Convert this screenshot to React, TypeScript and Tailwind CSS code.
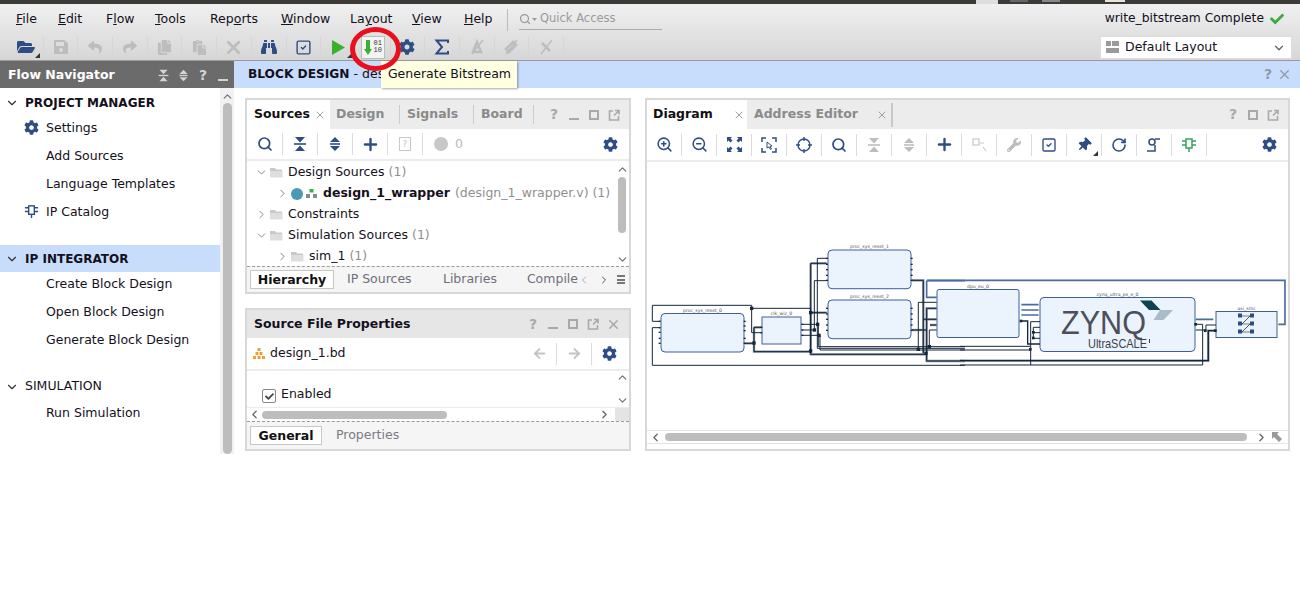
import React from 'react';
import { ChevronDown, ChevronLeft, ChevronRight, ChevronUp, Plus, RotateCw, Search, SquareCheck, X, ZoomIn, ZoomOut } from 'lucide-react';
import { FaArrowLeft, FaArrowRight, FaBinoculars, FaCheck, FaCog, FaCopy, FaFolderOpen, FaPaste, FaReply, FaSave, FaShare, FaThumbtack, FaWrench } from 'react-icons/fa';

const NAVY = '#2f4d85';
const DIM = '#bdbdbd';

function Corner() {
  return <span className="absolute right-[3px] bottom-[0px] w-0 h-0 border-l-[5px] border-l-transparent border-b-[5px] border-b-[#333]" />;
}

function Collapse({ color = NAVY, size = 16 }: { color?: string; size?: number }) {
  return (
    <svg width={size} height={size} viewBox="0 0 16 16">
      <path d="M3 1h10L8 6.5zM3 15h10L8 9.5z" fill={color} />
      <rect x="2" y="7.2" width="12" height="1.6" fill={color} />
    </svg>
  );
}

function Expand({ color = NAVY, size = 16 }: { color?: string; size?: number }) {
  return (
    <svg width={size} height={size} viewBox="0 0 16 16">
      <path d="M3 6h10L8 1zM3 10h10l-5 5z" fill={color} />
      <rect x="3" y="7.2" width="10" height="1.6" fill={color} />
    </svg>
  );
}

function Sigma() {
  return (
    <svg width="16" height="16" viewBox="0 0 16 16">
      <path d="M14 4V1.500H2.500L8 8l-5.500 6.500H14V12" fill="none" stroke={NAVY} strokeWidth="2" />
    </svg>
  );
}

function Slashed({ d }: { d: string }) {
  return (
    <svg width="18" height="18" viewBox="0 0 18 18" stroke={DIM} fill="none">
      <path d={d} strokeWidth="2.500" />
      <path d="M4 16 15 2" strokeWidth="1.500" />
    </svg>
  );
}

function Chip({ color = NAVY, size = 16 }: { color?: string; size?: number }) {
  return (
    <svg width={size} height={size} viewBox="0 0 16 16" fill="none" stroke={color} strokeWidth="1.500">
      <rect x="5" y="2" width="6" height="9" />
      <path d="M1 4h4M1 8h4M11 4h4M11 8h4M8 11v4" />
    </svg>
  );
}

function FolderGlyph() {
  return (
    <svg width="13" height="11" viewBox="0 0 13 11" className="shrink-0">
      <path d="M0 1h5l1 1.500h6V4H0z" fill="#c9c9c9" />
      <path d="M0 4h12.500v6.500H0z" fill="#dedede" />
    </svg>
  );
}

// one toolbar cell, 35px wide with the divider on its right
function Cell({ children, sep = true }: { children?: React.ReactNode; sep?: boolean }) {
  return (
    <div className={`relative w-[35px] h-[22px] flex items-center justify-center shrink-0 ${sep ? 'border-r border-[#dcdcdc]' : ''}`}>
      {children}
    </div>
  );
}

// main toolbar is a hair tighter than the panel ones
function TopCell({ children }: { children?: React.ReactNode }) {
  return (
    <div className="relative w-[34.700px] h-[22px] flex items-center justify-center shrink-0 border-r border-[#d6d6d6]">
      {children}
    </div>
  );
}

function WinButtons({ close = false, min = true }: { close?: boolean; min?: boolean }) {
  return (
    <div className="flex items-center gap-[6px] text-[#a9a9a9]">
      <span className="w-[14px] text-center font-bold text-[14px]">?</span>
      {min && <span className="w-[14px] h-[10px] flex items-end justify-center"><span className="w-[10px] h-[2px] bg-[#a9a9a9]" /></span>}
      <span className="w-[14px] flex justify-center"><span className="w-[10px] h-[10px] border-2 border-[#a9a9a9]" /></span>
      <svg width="14" height="14" viewBox="0 0 14 14" fill="none" stroke="#a9a9a9" strokeWidth="1.600">
        <path d="M6 3H2.500v9h9V8M8 2.500h4v4M12 2.500 7 7.500" />
      </svg>
      {close && <X size={15} strokeWidth={2.400} />}
    </div>
  );
}

function NavRow({ label, icon }: { label: string; icon?: React.ReactNode }) {
  return (
    <div className="h-[28px] flex items-center relative pl-[46px]">
      {icon && <span className="absolute left-[24px] top-[6px]">{icon}</span>}
      {label}
    </div>
  );
}

function NavHead({ label, bold = true, active, h = 'h-[24px]' }: { label: string; bold?: boolean; active?: boolean; h?: string }) {
  return (
    <div className={`${h} flex items-center pl-[5px] gap-[6px] ${active ? 'bg-[#c8dcfb]' : ''} ${bold ? 'font-bold text-[12px]' : ''}`}>
      <ChevronDown size={14} strokeWidth={2} className="text-[#333]" />
      <span>{label}</span>
    </div>
  );
}

function TreeRow({ indent, open, children }: { indent: string; open?: boolean; children: React.ReactNode }) {
  const Arrow = open ? ChevronDown : ChevronRight;
  return (
    <div className={`h-[21px] flex items-center whitespace-nowrap ${indent}`}>
      <Arrow size={13} strokeWidth={1.600} className="text-[#777] mr-[2px] shrink-0" />
      {children}
    </div>
  );
}

function Block({ x, y, w, h, r = 4, label }: { x: number; y: number; w: number; h: number; r?: number; label: string }) {
  return (
    <g>
      <rect x={x} y={y} width={w} height={h} rx={r} fill="#ebf3fc" stroke="#3e5f9c" strokeWidth="1" />
      <text x={x + w / 2} y={y - 2} fontSize="4.600" textAnchor="middle" fill="#555">{label}</text>
    </g>
  );
}

function Diagram() {
  const thin = { fill: 'none', stroke: '#14263a', strokeWidth: 3 };
  const heavy = ['M300 310H327M327 262H350M327 262V335H497', 'M497 70H545M497 70V343H845V363H960', 'M497 218H545', 'M800 121H835V340', 'M800 270H845', 'M835 238H875', 'M875 205H845V340', 'M875 255H855'];
  const pinsLeft = [205, 222, 238, 255, 271];
  return (
    <svg width="641" height="268" viewBox="647 162 641 268" className="block">
      <Block x={661} y={313.500} w={83} h={38.500} label="proc_sys_reset_0" />
      <Block x={828} y={250} w={83} h={38.700} label="proc_sys_reset_1" />
      <Block x={828} y={300} w={83} h={38.700} label="proc_sys_reset_2" />
      <Block x={762} y={317} w={39} h={27} r={0} label="clk_wiz_0" />
      <Block x={937} y={289.500} w={82} h={48} r={2} label="dpu_eu_0" />
      <Block x={1040} y={297.500} w={155} h={54} label="zynq_ultra_ps_e_0" />
      <Block x={1216} y={311.500} w={61} h={26} r={0} label="axi_smc" />

      {/* wires taken from the left half */}
      <g transform="translate(645 240) scale(0.3333)">
        {heavy.map(d => <path key={d} d={d} fill="none" stroke="#7e8a97" strokeWidth="7" />)}
        {heavy.map(d => <path key={d + 'c'} d={d} fill="none" stroke="#14263a" strokeWidth="3" />)}
        <path d="M45 244H22V196H320V205H497V340" {...thin} />
        <path d="M45 263H22V376H960" {...thin} />
        <path d="M320 205V278H350" {...thin} />
        <path d="M517 55H545M517 55V325H960" {...thin} />
        <path d="M508 122H545M508 122V270M470 270H508" {...thin} />
        <path d="M470 253H520V320H960" {...thin} />
        <path d="M470 286H525V330H960" {...thin} />
        <path d="M875 187H820V328" {...thin} />
        <path d="M853 320V270H875" {...thin} />
        <path d="M845 122V172H875M845 122H960" fill="none" stroke="#4a6ca5" strokeWidth="5" />
        {[[320, 205], [327, 309], [497, 218], [518, 253], [508, 270], [522, 286], [497, 333], [820, 328], [853, 320], [843, 340]].map(([cx, cy]) => (
          <rect key={`${cx}-${cy}`} x={cx - 5} y={cy - 5} width="10" height="10" fill="#14263a" />
        ))}
        {[[44, 244], [44, 263], [44, 277], [44, 295], [44, 310], [299, 244], [299, 258], [299, 272], [299, 295], [299, 310], [472, 253], [472, 270], [472, 286], [349, 262], [349, 278]].map(([cx, cy]) => (
          <rect key={`p${cx}-${cy}`} x={cx - 3} y={cy - 2} width="6" height="4" fill="#14263a" />
        ))}
        {[55, 73, 89, 106, 121].map(cy => <rect key={`a${cy}`} x={543} y={cy - 2} width="6" height="4" fill="#14263a" />)}
        {pinsLeft.map(cy => <rect key={`b${cy}`} x={543} y={cy - 2} width="6" height="4" fill="#14263a" />)}
        {[55, 73, 89, 106, 121].map(cy => <rect key={`c${cy}`} x={797} y={cy - 2} width="6" height="4" fill="#14263a" />)}
        {pinsLeft.map(cy => <rect key={`d${cy}`} x={797} y={cy - 2} width="6" height="4" fill="#14263a" />)}
      </g>

      {/* wires taken from the right half */}
      <g transform="translate(960 270) scale(0.3333)">
        <path d="M-99 31H975V163H955" fill="none" stroke="#4a6ca5" strokeWidth="5" />
        <path d="M184 104H236M184 120H236M184 135H236M707 148H760" fill="none" stroke="#4a6ca5" strokeWidth="5" />
        <path d="M0 272H745V182H768" fill="none" stroke="#7e8a97" strokeWidth="7" />
        <path d="M0 272H745V182H768M185 153H203V222H240" fill="none" stroke="#14263a" strokeWidth="4" />
        <path d="M240 155H212V285M0 285H728V163H707" {...thin} />
        <path d="M240 172H220V205M240 188H220M240 205H220" {...thin} />
        <path d="M0 229H210M0 240H210" {...thin} />
        <path d="M707 180H738V165H768" {...thin} />
        {[[183, 153], [211, 238], [220, 187], [220, 204], [707, 163], [736, 182], [766, 182]].map(([cx, cy]) => (
          <rect key={`${cx}-${cy}`} x={cx - 4} y={cy - 4} width="8" height="8" fill="#14263a" />
        ))}
      </g>

      {/* zynq logo */}
      <text x="1061" y="334" fontSize="33" fill="#4c4f5c" textLength="85" lengthAdjust="spacingAndGlyphs" fontFamily="'Liberation Sans', sans-serif">ZYNQ</text>
      <text x="1088" y="348" fontSize="13.500" fill="#3c3f4c" textLength="59" lengthAdjust="spacingAndGlyphs" fontFamily="'Liberation Sans', sans-serif">UltraSCALE</text>
      <rect x="1149" y="339" width="1" height="4" fill="#3c3f4c" />
      <path d="M1140 300.500h11.500l9 9.500H1149z" fill="#0d4450" />
      <path d="M1160 310h13l-9.500 10h-10z" fill="#aabcc8" />

      {/* axi_smc crossbar glyph */}
      <g fill={NAVY}>
        {[0, 1, 2].map(i => (
          <g key={i}>
            <rect x="1238" y={313.500 + i * 8} width="4" height="4" />
            <rect x="1250" y={313.500 + i * 8} width="4" height="4" />
          </g>
        ))}
      </g>
      <path d="M1242 316h8l-8 8h8l-8 8h8M1242 324l8-8M1242 332l8-8" fill="none" stroke="#333" strokeWidth="0.600" />
    </svg>
  );
}

const menu = [
  { pre: '', u: 'F', post: 'ile', w: 'w-[42px]' },
  { pre: '', u: 'E', post: 'dit', w: 'w-[48px]' },
  { pre: 'F', u: 'l', post: 'ow', w: 'w-[49px]' },
  { pre: '', u: 'T', post: 'ools', w: 'w-[55px]' },
  { pre: 'Rep', u: 'o', post: 'rts', w: 'w-[71px]' },
  { pre: '', u: 'W', post: 'indow', w: 'w-[69px]' },
  { pre: 'La', u: 'y', post: 'out', w: 'w-[62px]' },
  { pre: '', u: 'V', post: 'iew', w: 'w-[52px]' },
  { pre: '', u: 'H', post: 'elp', w: 'w-[41px]' },
];

export default function App() {
  return (
    <div className="relative w-[1300px] h-[601px] bg-white overflow-hidden font-['DejaVu_Sans',sans-serif] text-[12.500px] text-[#14101c]">
      {/* sliver of the desktop above the window */}
      <div className="h-[4px] bg-[#3c3b37] flex pl-[976px]">
        <span className="w-[22px] h-full bg-[#dedede]" />
        <span className="w-[18px] h-[2px] ml-[12px] bg-[#666]" />
        <span className="w-[18px] h-[2px] ml-[14px] bg-[#888]" />
        <span className="w-[20px] h-[2px] ml-[45px] bg-[#e8e4d8]" />
      </div>

      {/* menu + toolbar */}
      <div className="h-[56px] bg-gradient-to-b from-[#f0f0f0] to-[#d6d6d6] flex justify-between">
        <div>
          <div className="h-[30px] flex items-center pl-[16px] pt-[1px]">
            {menu.map(m => (
              <span key={m.u + m.post} className={`${m.w} shrink-0`}>
                {m.pre}<span className="underline">{m.u}</span>{m.post}
              </span>
            ))}
            <span className="w-px h-[22px] bg-[#bbb] mr-[11px] ml-[2px]" />
            <div className="w-[143px] h-[21px] flex items-center border-b border-[#aaa] text-[#9a9a9a] text-[11.500px]">
              <Search size={12} strokeWidth={2.500} />
              <svg width="5" height="3" viewBox="0 0 5 3" fill="#9a9a9a" className="ml-px mr-[2px]"><path d="M0 0h5L2.500 3z" /></svg>
              <span className="ml-[1px]">Quick Access</span>
            </div>
          </div>
          <div className="h-[26px] flex items-center pl-[9px] text-[#bdbdbd]">
            <TopCell><FaFolderOpen size={18} color={NAVY} /><Corner /></TopCell>
            <TopCell><FaSave size={16} /></TopCell>
            <TopCell><FaReply size={14} /></TopCell>
            <TopCell><FaShare size={14} /></TopCell>
            <TopCell><FaCopy size={15} /></TopCell>
            <TopCell><FaPaste size={15} /></TopCell>
            <TopCell><X size={21} strokeWidth={3} /></TopCell>
            <TopCell><FaBinoculars size={16} color={NAVY} /></TopCell>
            <TopCell><SquareCheck size={17} color={NAVY} strokeWidth={2} /></TopCell>
            <TopCell>
              <svg width="13" height="15" viewBox="0 0 13 15"><path d="M0 0l13 7.500L0 15z" fill="#3bb02f" /></svg>
              <Corner />
            </TopCell>
            <TopCell>
              <div className="w-[24px] h-[23px] bg-[#f4f4f4] border border-[#bcbcbc] flex items-center justify-center gap-[2px]">
                <svg width="8" height="15" viewBox="0 0 8 15"><path d="M2 0h4v9h2l-4 6-4-6h2z" fill="#3bb02f" /></svg>
                <span className="text-[7px] leading-[7px] text-[#333] font-['Liberation_Mono',monospace]">01<br />10</span>
              </div>
            </TopCell>
            <TopCell><FaCog size={16} color={NAVY} /></TopCell>
            <TopCell><Sigma /></TopCell>
            <TopCell><Slashed d="M5 14 9 4l4 10z" /></TopCell>
            <TopCell><Slashed d="M4 11 11 4l3 3-7 7z" /></TopCell>
            <TopCell><Slashed d="M5 5 13 13" /></TopCell>
          </div>
        </div>
        <div className="w-[193px] pr-[8px] flex flex-col items-end">
          <div className="h-[29px] flex items-center gap-[6px] pr-[8px] whitespace-nowrap text-[12.300px]">
            write_bitstream Complete <FaCheck size={14} color="#3eaa3e" />
          </div>
          <div className="w-[192px] h-[23px] mt-[3px] bg-white border border-[#dcdcdc] flex items-center pl-[5px]">
            <svg width="13" height="13" viewBox="0 0 13 13" fill="#9a9a9a"><path d="M0 0h5v5H0zM6 0h7v5H6zM0 7h13v5H0z" /></svg>
            <span className="ml-[6px]">Default Layout</span>
            <ChevronDown size={14} strokeWidth={2.400} className="ml-auto mr-[5px] text-[#666]" />
          </div>
        </div>
      </div>

      <div className="h-px bg-[#9a9a9a]" />

      <div className="flex h-[393px]">
        {/* flow navigator */}
        <div className="w-[234px] shrink-0 flex flex-col">
          <div className="h-[27px] shrink-0 bg-[#6b6b6b] text-white font-bold text-[12.500px] flex items-center pl-[8px] pt-px">
            <span>Flow Navigator</span>
            <div className="ml-auto flex items-center pr-[1px] text-[#d4d4d4]">
              <span className="w-[20px] flex justify-center"><Collapse color="#d4d4d4" size={13} /></span>
              <span className="w-[20px] flex justify-center"><Expand color="#d4d4d4" size={13} /></span>
              <span className="w-[20px] text-center text-[14px]">?</span>
              <span className="w-[20px] flex justify-center pt-[9px]"><span className="w-[10px] h-[2px] bg-[#d4d4d4]" /></span>
            </div>
          </div>
          <div className="flex flex-1 min-h-0">
            <div className="w-[220px] pt-[3px]">
              <NavHead label="PROJECT MANAGER" h="h-[23px]" />
              <NavRow label="Settings" icon={<FaCog size={15} color={NAVY} />} />
              <NavRow label="Add Sources" />
              <NavRow label="Language Templates" />
              <NavRow label="IP Catalog" icon={<Chip size={15} />} />
              <div className="h-[19px]" />
              <NavHead label="IP INTEGRATOR" active h="h-[27px]" />
              <div className="-mt-[2px]">
                <NavRow label="Create Block Design" />
                <NavRow label="Open Block Design" />
                <NavRow label="Generate Block Design" />
              </div>
              <div className="h-[20px]" />
              <NavHead label="SIMULATION" bold={false} h="h-[25px]" />
              <NavRow label="Run Simulation" />
            </div>
            <div className="w-[14px] bg-[#f1f1f1] flex flex-col items-center">
              <ChevronUp size={13} strokeWidth={2.400} className="text-[#777] mt-[2px] shrink-0" />
              <div className="w-[9px] flex-1 bg-[#bdbdbd] rounded-[5px]" />
            </div>
          </div>
        </div>

        <div className="flex-1 flex flex-col">
          <div className="h-[27px] shrink-0 bg-[#c8dcfb] flex items-center pl-[14px] pr-[8px]">
            <span className="font-bold text-[12.200px]">BLOCK DESIGN</span>
            <span className="ml-[4px]">- des</span>
            <div className="ml-auto flex items-center gap-[5px] text-[#8f9aa8]">
              <span className="font-bold text-[14px]">?</span><X size={15} strokeWidth={2} />
            </div>
          </div>

          <div className="flex pt-[10px] pl-[11px] gap-[14px]">
            <div className="w-[386px] flex flex-col gap-[14px]">
              {/* sources */}
              <div className="h-[196px] border-2 border-[#d8d8d8] flex flex-col bg-white">
                <div className="h-[29px] shrink-0 bg-[#ececec] flex items-center font-bold text-[#8a8a8a]">
                  <div className="w-[83px] h-full bg-white flex items-center pl-[7px] gap-[4px] text-[#111]">
                    <span>Sources</span><X size={12} strokeWidth={1.600} className="text-[#888]" />
                  </div>
                  <span className="w-[70px] pl-[6px] border-r border-[#ccc]">Design</span>
                  <span className="w-[74px] pl-[7px] border-r border-[#ccc]">Signals</span>
                  <span className="w-[60px] pl-[7px] border-r border-[#ccc]">Board</span>
                  <div className="ml-auto pr-[8px] font-normal"><WinButtons /></div>
                </div>
                <div className="h-[32px] shrink-0 flex items-center pl-[1px] border-b-2 border-[#ececec]">
                  <Cell><Search size={16} color={NAVY} strokeWidth={2.600} /></Cell>
                  <Cell><Collapse /></Cell>
                  <Cell><Expand /></Cell>
                  <Cell><Plus size={19} color={NAVY} strokeWidth={3} /></Cell>
                  <Cell>
                    <span className="w-[12px] h-[14px] border border-[#c8c8c8] text-[9px] leading-[12px] text-center text-[#c0c0c0]">?</span>
                  </Cell>
                  <div className="flex items-center gap-[7px] pl-[11px] text-[#bbb]">
                    <span className="w-[14px] h-[14px] rounded-full bg-[#c8c8c8]" /> 0
                  </div>
                  <FaCog size={15} color={NAVY} className="ml-auto mr-[11px]" />
                </div>
                <div className="flex-1 flex min-h-0">
                  <div className="flex-1 min-w-0 overflow-hidden pt-px">
                    <TreeRow indent="pl-[8px]" open><span className="mr-[5px]"><FolderGlyph /></span>Design Sources <span className="text-[#8f8f8f] ml-[4px]">(1)</span></TreeRow>
                    <TreeRow indent="pl-[29px]">
                      <span className="w-[12px] h-[12px] rounded-full bg-[#4a9ab5] mr-[3px] shrink-0" />
                      <svg width="11" height="9" viewBox="0 0 11 9" className="mr-[6px] shrink-0"><path d="M3.500 0h4v3.500h-4z" fill="#35b04a" /><path d="M0 5h4v4H0zM7 5h4v4H7z" fill="#8a8a8a" /></svg>
                      <span className="font-bold">design_1_wrapper</span>
                      <span className="text-[#8f8f8f] ml-[5px]">(design_1_wrapper.v) (1)</span>
                    </TreeRow>
                    <TreeRow indent="pl-[8px]"><span className="mr-[5px]"><FolderGlyph /></span>Constraints</TreeRow>
                    <TreeRow indent="pl-[8px]" open><span className="mr-[5px]"><FolderGlyph /></span>Simulation Sources <span className="text-[#8f8f8f] ml-[4px]">(1)</span></TreeRow>
                    <TreeRow indent="pl-[29px]"><span className="mr-[5px]"><FolderGlyph /></span>sim_1 <span className="text-[#8f8f8f] ml-[4px]">(1)</span></TreeRow>
                  </div>
                  <div className="w-[14px] shrink-0 flex flex-col items-center">
                    <ChevronUp size={13} strokeWidth={2.400} className="text-[#777] mt-[2px] shrink-0" />
                    <div className="w-[8px] h-[56px] mt-[1px] bg-[#bdbdbd] rounded-[4px]" />
                    <ChevronDown size={13} strokeWidth={2.400} className="text-[#777] mt-auto shrink-0" />
                  </div>
                </div>
                <div className="h-[26px] shrink-0 bg-[#f5f5f5] border-t border-dashed border-[#9a9a9a] flex items-center pl-[3px] text-[#6f6f7a]">
                  <span className="w-[84px] h-[19px] bg-white border border-[#c8c8c8] text-center font-bold text-[#111] leading-[17px]">Hierarchy</span>
                  <span className="ml-[13px] w-[96px]">IP Sources</span>
                  <span className="w-[84px]">Libraries</span>
                  <span>Compile</span>
                  <ChevronLeft size={12} className="ml-auto text-[#aaa]" />
                  <ChevronRight size={12} className="ml-[8px] text-[#555]" />
                  <span className="ml-[7px] mr-[4px] w-[8px] h-[9px] border-y-2 border-[#777] relative after:absolute after:left-0 after:right-0 after:top-[1.500px] after:h-[2px] after:bg-[#777]" />
                </div>
              </div>

              {/* source file properties */}
              <div className="h-[143px] border-2 border-[#d8d8d8] flex flex-col">
                <div className="h-[28px] shrink-0 bg-[#e6e6e6] flex items-center pl-[7px] pr-[8px] font-bold">
                  <span>Source File Properties</span>
                  <div className="ml-auto font-normal"><WinButtons close /></div>
                </div>
                <div className="h-[33px] shrink-0 flex items-center pl-[6px] border-b-2 border-[#ececec]">
                  <svg width="12" height="11" viewBox="0 0 12 11" fill="#f0a030" className="mr-[5px]"><path d="M4.500 0h3v3h-3zM2.500 4h3v3h-3zM6.500 4h3v3h-3zM0 8h3v3H0zM4.500 8h3v3h-3zM9 8h3v3H9z" /></svg>
                  <span>design_1.bd</span>
                  <div className="ml-auto flex items-center pr-[2px]">
                    <Cell><FaArrowLeft size={13} color="#c4c4c4" /></Cell>
                    <Cell><FaArrowRight size={13} color="#c4c4c4" /></Cell>
                    <div className="w-[35px] flex justify-center"><FaCog size={15} color={NAVY} /></div>
                  </div>
                </div>
                <div className="h-[36px] shrink-0 flex">
                  <div className="flex-1 flex items-end pb-[3px] pl-[15px] gap-[5px]">
                    <span className="w-[14px] h-[14px] mb-[1px] rounded-[2px] border border-[#888] flex items-center justify-center"><FaCheck size={9} color="#444" /></span>
                    Enabled
                  </div>
                  <div className="w-[14px] flex flex-col items-center justify-between">
                    <ChevronUp size={13} strokeWidth={2.400} className="text-[#777]" />
                    <ChevronDown size={13} strokeWidth={2.400} className="text-[#777]" />
                  </div>
                </div>
                <div className="h-[14px] shrink-0 flex items-center border-t border-[#ececec]">
                  <ChevronLeft size={13} strokeWidth={2.400} className="text-[#666] ml-[1px] shrink-0" />
                  <div className="w-[185px] h-[8px] bg-[#bdbdbd] rounded-[4px] ml-px" />
                  <ChevronRight size={13} strokeWidth={2.400} className="text-[#666] ml-auto mr-[4px] shrink-0" />
                  <div className="w-[14px] h-full bg-[#e4e4e4] shrink-0" />
                </div>
                <div className="flex-1 bg-[#f5f5f5] border-t border-dashed border-[#9a9a9a] flex items-center pl-[3px] text-[#7a7a82]">
                  <span className="w-[72px] h-[19px] bg-white border border-[#c8c8c8] text-center font-bold text-[#111] leading-[17px]">General</span>
                  <span className="ml-[14px]">Properties</span>
                </div>
              </div>
            </div>

            {/* diagram */}
            <div className="w-[645px] h-[353px] border-2 border-[#d8d8d8] flex flex-col">
              <div className="h-[29px] shrink-0 bg-[#ececec] flex items-center font-bold text-[#8a8a8a]">
                <div className="w-[100px] h-full bg-white flex items-center pl-[6px] text-[#111]">
                  <span>Diagram</span><X size={12} strokeWidth={1.600} className="ml-auto mr-[2px] text-[#888]" />
                </div>
                <div className="w-[146px] h-[24px] flex items-center pl-[7px] border-r-2 border-[#c8c8c8]">
                  <span>Address Editor</span><X size={12} strokeWidth={1.600} className="ml-auto mr-[3px] text-[#888]" />
                </div>
                <div className="ml-auto pr-[8px] font-normal"><WinButtons min={false} /></div>
              </div>
              <div className="h-[33px] shrink-0 flex items-center border-b-2 border-[#ececec]">
                <Cell><ZoomIn size={17} color={NAVY} strokeWidth={2.200} /></Cell>
                <Cell><ZoomOut size={17} color={NAVY} strokeWidth={2.200} /></Cell>
                <Cell>
                  <svg width="15" height="15" viewBox="0 0 15 15" fill={NAVY}><path d="M0 0h5L3.500 1.500l2 2-2 2-2-2L0 5zM15 0v5l-1.500-1.500-2 2-2-2 2-2L10 0zM0 15v-5l1.500 1.500 2-2 2 2-2 2L5 15zM15 15h-5l1.500-1.500-2-2 2-2 2 2L15 10z" /></svg>
                </Cell>
                <Cell>
                  <svg width="16" height="16" viewBox="0 0 16 16" fill="none" stroke={NAVY} strokeWidth="1.500"><path d="M1 5V1h4M11 1h4v4M15 11v4h-4M5 15H1v-4" /><path d="M6 5l5 4-2 .5 1.500 2.500-1 .5L8 10l-2 1z" strokeWidth="1" /></svg>
                </Cell>
                <Cell>
                  <svg width="16" height="16" viewBox="0 0 16 16" fill="none" stroke={NAVY} strokeWidth="1.400"><circle cx="8" cy="8" r="6" /><path d="M8 0v4M8 12v4M0 8h4M12 8h4" /></svg>
                </Cell>
                <Cell><Search size={16} color={NAVY} strokeWidth={2.600} /></Cell>
                <Cell><Collapse color={DIM} /></Cell>
                <Cell><Expand color={DIM} /></Cell>
                <Cell><Plus size={19} color={NAVY} strokeWidth={3} /></Cell>
                <Cell>
                  <svg width="15" height="14" viewBox="0 0 15 14" fill="none" stroke="#c8c8c8" strokeWidth="1.200"><rect x="1" y="1" width="6" height="6" /><path d="M8 5h4M11 9l3 4" /></svg>
                </Cell>
                <Cell><FaWrench size={14} color={DIM} /></Cell>
                <Cell><SquareCheck size={16} color={NAVY} strokeWidth={2} /></Cell>
                <Cell><FaThumbtack size={14} color={NAVY} className="rotate-45" /><Corner /></Cell>
                <Cell><RotateCw size={16} color={NAVY} strokeWidth={2.400} /></Cell>
                <Cell>
                  <svg width="16" height="16" viewBox="0 0 16 16" fill="none" stroke={NAVY} strokeWidth="1.500"><circle cx="6" cy="5" r="3" /><path d="M9 2h5M1 14h8V8" /></svg>
                </Cell>
                <Cell><Chip color="#3aa15a" /></Cell>
                <FaCog size={15} color={NAVY} className="ml-auto mr-[11px]" />
              </div>
              <div className="h-[268px] shrink-0 overflow-hidden"><Diagram /></div>
              <div className="h-[14px] shrink-0 flex items-center border-y border-[#e4e4e4]">
                <ChevronLeft size={13} strokeWidth={2.400} className="text-[#666] ml-[2px] shrink-0" />
                <div className="w-[582px] h-[8px] bg-[#bdbdbd] rounded-[4px] ml-[3px] shrink-0" />
                <ChevronRight size={13} strokeWidth={2.400} className="text-[#666] ml-[8px] shrink-0" />
                <svg width="12" height="12" viewBox="0 0 12 12" fill="#999" className="ml-[3px] shrink-0"><path d="M1 1h7L6 3l5 5-3 3-5-5-2 2z" /></svg>
              </div>
            </div>
          </div>
        </div>
      </div>

      {/* overlays: tooltip and the red ring drawn on the capture */}
      <div className="absolute left-[381px] top-[61px] w-[136px] h-[27px] pl-[1px] bg-[#ffffe1] shadow-[1px_1px_2px_rgba(0,0,0,0.35)] flex items-center justify-center whitespace-nowrap">
        Generate Bitstream
      </div>
      <div className="absolute left-[350px] top-[27px] w-[51px] h-[44px] rounded-[50%] border-[5px] border-[#e8101c]" />
    </div>
  );
}
